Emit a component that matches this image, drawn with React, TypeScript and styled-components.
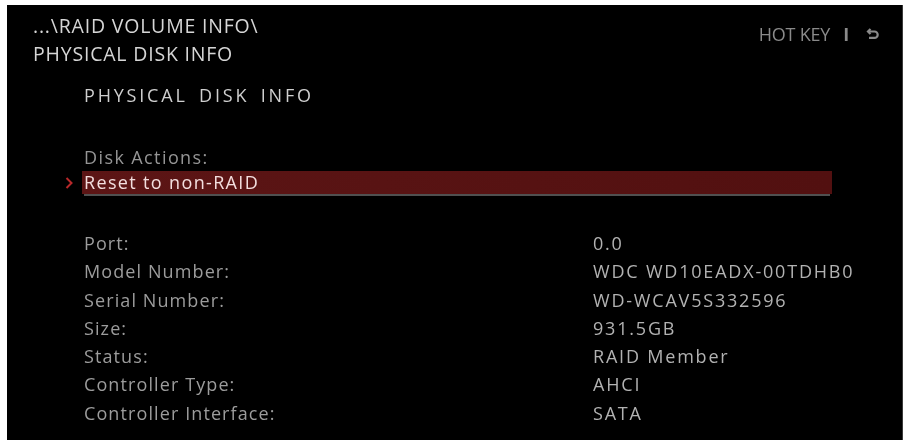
import React from "react";
import styled, { createGlobalStyle } from "styled-components";

const Global = createGlobalStyle`
  html, body { margin: 0; padding: 0; background: #ffffff; }
  body { font-family: "Open Sans", "DejaVu Sans", sans-serif; }
`;

const Screen = styled.div`
  margin: 5px 0 0 7px;
  width: 895px;
  height: 435px;
  background: #000;
  border-right: 1px solid #3a3a3a;
  display: flex;
  flex-direction: column;
  filter: blur(0.35px);
`;

const Header = styled.div`
  display: flex;
  justify-content: space-between;
  align-items: flex-start;
  padding: 7px 22px 0 26px;
`;

const Crumbs = styled.div`
  color: #d6d6d6;
  font-size: 19.5px;
  line-height: 28px;
  letter-spacing: 0.8px;
`;

const HotKey = styled.div`
  display: flex;
  align-items: center;
  color: #8a8a8a;
  font-size: 18px;
  line-height: 20px;
  padding-top: 12px;
  letter-spacing: -0.2px;
`;

const Sep = styled.span`
  font-weight: 700;
  color: #8a8a8a;
  margin: 0 17px 0 13px;
`;

const Title = styled.div`
  color: #cfcfcf;
  font-size: 18px;
  letter-spacing: 2.8px;
  word-spacing: 4px;
  padding: 16px 0 0 77px;
  line-height: 22px;
`;

const Section = styled.div`
  padding: 40px 70px 0 58px;
  display: flex;
  flex-direction: column;
`;

const SectionLabel = styled.div`
  color: #959595;
  font-size: 18px;
  line-height: 22px;
  letter-spacing: 1.4px;
  padding-left: 19px;
`;

const ActionRow = styled.div`
  display: flex;
  align-items: center;
  height: 23px;
  margin-top: 3px;
`;

const Chevron = styled.div`
  width: 17px;
  height: 23px;
  display: flex;
  align-items: center;
  justify-content: flex-start;
`;

const ActionBar = styled.div`
  flex: 1;
  height: 23px;
  background: linear-gradient(90deg, #5c1515 0%, #521010 100%);
  color: #f3dede;
  font-size: 18px;
  line-height: 23px;
  letter-spacing: 1.35px;
  padding-left: 2px;
  box-shadow: 0 4px 0 -2px #505050;
`;

const InfoGrid = styled.div`
  display: grid;
  grid-template-columns: 509px 1fr;
  padding: 35px 0 0 77px;
`;

const Label = styled.div`
  color: #9c9c9c;
  font-size: 18px;
  line-height: 28.3px;
  letter-spacing: 1.1px;
`;

const Value = styled.div`
  color: #b2b2b2;
  font-size: 18px;
  line-height: 28.3px;
  letter-spacing: 1.8px;
`;

const rows: [string, string][] = [
  ["Port:", "0.0"],
  ["Model Number:", "WDC WD10EADX-00TDHB0"],
  ["Serial Number:", "WD-WCAV5S332596"],
  ["Size:", "931.5GB"],
  ["Status:", "RAID Member"],
  ["Controller Type:", "AHCI"],
  ["Controller Interface:", "SATA"],
];

export default function App() {
  return (
    <>
      <Global />
      <Screen>
        <Header>
          <Crumbs>
            <div>...\RAID VOLUME INFO\</div>
            <div>PHYSICAL DISK INFO</div>
          </Crumbs>
          <HotKey>
            <span>HOT KEY</span>
            <Sep>I</Sep>
            <svg width="14" height="13" viewBox="0 0 14 13" fill="none" stroke="#8a8a8a" strokeWidth="2.2">
              <path d="M4.5 1 L2 3.5 L4.5 6" />
              <path d="M2 3.5 H8.5 a3.2 3.2 0 0 1 0 6.4 H3" />
            </svg>
          </HotKey>
        </Header>
        <Title>PHYSICAL DISK INFO</Title>
        <Section>
          <SectionLabel>Disk Actions:</SectionLabel>
          <ActionRow>
            <Chevron>
              <svg width="8" height="12" viewBox="0 0 8 12" fill="none" stroke="#b8282a" strokeWidth="2">
                <path d="M1.5 1 L6.5 6 L1.5 11" />
              </svg>
            </Chevron>
            <ActionBar>Reset to non-RAID</ActionBar>
          </ActionRow>
        </Section>
        <InfoGrid>
          {rows.map(([l, v]) => (
            <React.Fragment key={l}>
              <Label>{l}</Label>
              <Value>{v}</Value>
            </React.Fragment>
          ))}
        </InfoGrid>
      </Screen>
    </>
  );
}
